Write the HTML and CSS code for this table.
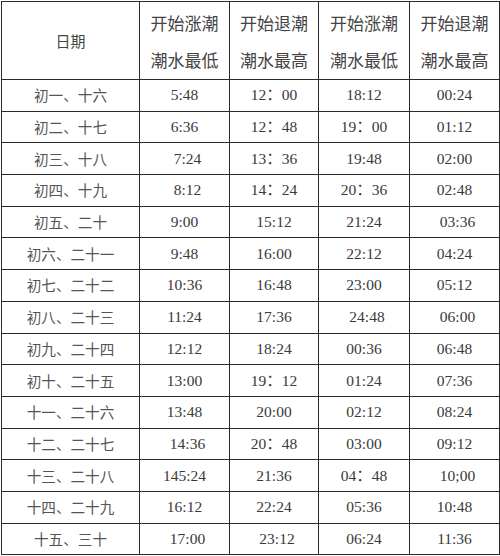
FILE: index.html
```html
<!DOCTYPE html>
<html lang="zh">
<head>
<meta charset="utf-8">
<title>潮汐时间表</title>
<link rel="stylesheet" href="styles.css">
</head>
<body>
<table class="tide">
  <colgroup>
    <col class="c-date"><col class="c-t1"><col class="c-t2"><col class="c-t3"><col class="c-t4">
  </colgroup>
  <thead>
    <tr>
      <th class="date-head">日期</th>
      <th><span class="hl">开始涨潮</span><span class="hl">潮水最低</span></th>
      <th><span class="hl">开始退潮</span><span class="hl">潮水最高</span></th>
      <th><span class="hl">开始涨潮</span><span class="hl">潮水最低</span></th>
      <th><span class="hl">开始退潮</span><span class="hl">潮水最高</span></th>
    </tr>
  </thead>
  <tbody>
    <tr><td class="d">初一、十六</td><td>5:48</td><td>12：00</td><td>18:12</td><td>00:24</td></tr>
    <tr><td class="d">初二、十七</td><td>6:36</td><td>12：48</td><td>19：00</td><td>01:12</td></tr>
    <tr><td class="d">初三、十八</td><td class="r">7:24</td><td>13：36</td><td>19:48</td><td>02:00</td></tr>
    <tr><td class="d">初四、十九</td><td class="r">8:12</td><td>14：24</td><td>20：36</td><td>02:48</td></tr>
    <tr><td class="d">初五、二十</td><td>9:00</td><td>15:12</td><td>21:24</td><td class="r">03:36</td></tr>
    <tr><td class="d">初六、二十一</td><td>9:48</td><td>16:00</td><td>22:12</td><td>04:24</td></tr>
    <tr><td class="d">初七、二十二</td><td>10:36</td><td>16:48</td><td>23:00</td><td>05:12</td></tr>
    <tr><td class="d">初八、二十三</td><td>11:24</td><td>17:36</td><td class="r">24:48</td><td class="r">06:00</td></tr>
    <tr><td class="d">初九、二十四</td><td>12:12</td><td>18:24</td><td>00:36</td><td>06:48</td></tr>
    <tr><td class="d">初十、二十五</td><td>13:00</td><td>19：12</td><td>01:24</td><td>07:36</td></tr>
    <tr><td class="d">十一、二十六</td><td>13:48</td><td>20:00</td><td>02:12</td><td>08:24</td></tr>
    <tr><td class="d">十二、二十七</td><td class="r">14:36</td><td>20：48</td><td>03:00</td><td>09:12</td></tr>
    <tr><td class="d">十三、二十八</td><td>145:24</td><td>21:36</td><td>04：48</td><td class="r">10;00</td></tr>
    <tr><td class="d">十四、二十九</td><td>16:12</td><td>22:24</td><td>05:36</td><td>10:48</td></tr>
    <tr><td class="d">十五、三十</td><td class="r">17:00</td><td class="r">23:12</td><td>06:24</td><td>11:36</td></tr>
  </tbody>
</table>
</body>
</html>
```

FILE: styles.css
```css
html, body {
  margin: 0;
  padding: 0;
  background: #ffffff;
}

body {
  padding: 1px 0 0 1px;
}

.tide {
  border-collapse: collapse;
  table-layout: fixed;
  width: 498px;
  font-family: "Liberation Serif", "Noto Sans CJK SC", serif;
  color: #3a3a3a;
}

.c-date { width: 138px; }
.c-t1 { width: 90px; }
.c-t2 { width: 89px; }
.c-t3 { width: 91px; }
.c-t4 { width: 90px; }

.tide th,
.tide td {
  border: 1.5px solid #2a2a2a;
  padding: 0;
  text-align: center;
  vertical-align: middle;
}

.tide thead tr {
  height: 78px;
}

.tide th {
  font-weight: normal;
  font-family: "Noto Sans CJK SC", sans-serif;
  font-size: 17px;
  color: #444;
}

.tide th .hl {
  display: block;
  line-height: 37px;
}

.tide th.date-head {
  font-size: 15px;
}

.tide tbody tr {
  height: 31.7px;
}

.tide td {
  font-size: 15.5px;
  line-height: 20px;
}

.tide td.d {
  font-family: "Noto Sans CJK SC", sans-serif;
  font-size: 14.6px;
  color: #555;
}

.tide td.r {
  padding-left: 6px;
}
```
